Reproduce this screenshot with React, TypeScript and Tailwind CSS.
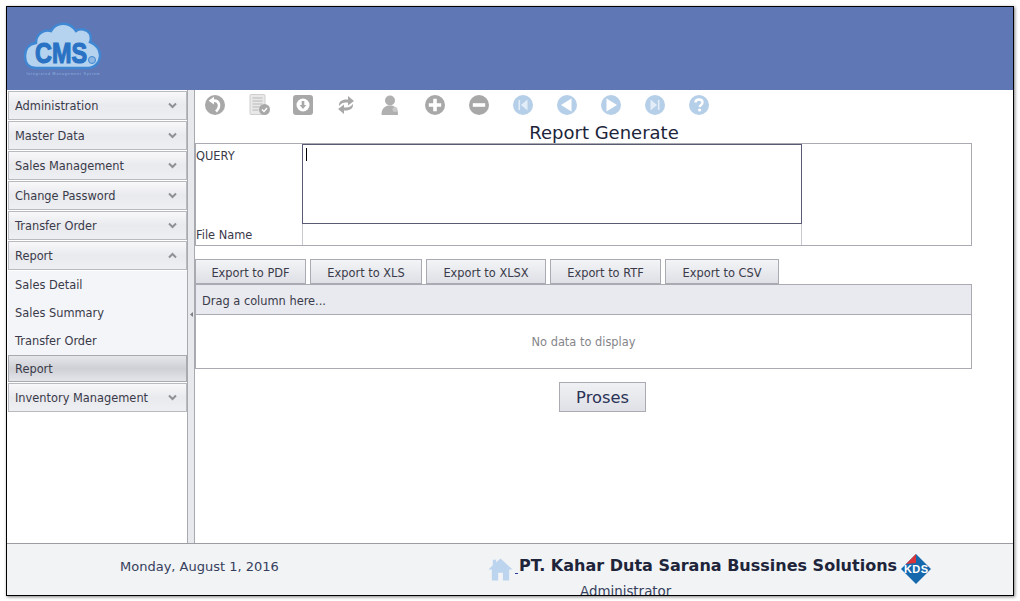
import React from "react";

const font = { fontFamily: '"DejaVu Sans", Verdana, sans-serif' };

const Chevron = ({ up }: { up?: boolean }) => (
  <svg width="9" height="7" viewBox="0 0 9 7" className="mb-[2px] shrink-0">
    <path d={up ? "M1 5.5 L4.5 2 L8 5.5" : "M1 1.5 L4.5 5 L8 1.5"} fill="none" stroke="#8e9096" strokeWidth="2" />
  </svg>
);

const MenuHead = ({ label, up }: { label: string; up?: boolean }) => (
  <div className="flex h-[29px] items-center justify-between border border-[#b9babf] bg-gradient-to-b from-[#f8f8fa] via-[#e9eaee] to-[#eeeff2] pl-[6px] pr-[9px] pt-[2px] text-[11.4px] text-[#3a3a4a]">
    <span>{label}</span>
    <Chevron up={up} />
  </div>
);

const subItems = ["Sales Detail", "Sales Summary", "Transfer Order"];

const Sidebar = () => (
  <aside className="flex w-[180px] shrink-0 flex-col gap-[1px] pl-[1px] pt-[1px]">
    <MenuHead label="Administration" />
    <MenuHead label="Master Data" />
    <MenuHead label="Sales Management" />
    <MenuHead label="Change Password" />
    <MenuHead label="Transfer Order" />
    <MenuHead label="Report" up />
    <div className="flex flex-col bg-[#f4f5f8] text-[11.4px] text-[#3a3a4a]">
      {subItems.map((item) => (
        <div key={item} className="flex h-[28px] items-center pl-[7px] pt-[2px]">
          {item}
        </div>
      ))}
      <div className="flex h-[27px] items-center border border-[#a9aab0] bg-gradient-to-b from-[#e6e7eb] via-[#cfd0d6] to-[#e4e5e9] pl-[6px] pt-[2px]">
        Report
      </div>
    </div>
    <MenuHead label="Inventory Management" />
  </aside>
);

const Splitter = () => (
  <div className="flex w-[8px] shrink-0 items-center border-x border-[#a9aab0] bg-[#e8e9ed] pl-[2px]">
    <svg width="3" height="5" viewBox="0 0 3 5" className="mb-[5px]">
      <path d="M3 0 L0 2.5 L3 5 Z" fill="#7d7e85" />
    </svg>
  </div>
);

const gray = "#a8a8a8";
const blue = "#b6cfe9";

const tools: React.ReactNode[] = [
  <svg key="undo" width="20" height="20" viewBox="0 0 20 20">
    <circle cx="10" cy="10" r="10" fill={gray} />
    <path d="M9 1.8 L9 9.6 L3.6 5.7 Z" fill="#fff" />
    <path d="M8 5.7 C14 5 16.5 11 11 16.5" fill="none" stroke="#fff" strokeWidth="2.6" />
  </svg>,
  <svg key="doc" width="22" height="22" viewBox="0 0 22 22">
    <rect x="1" y="0.5" width="15" height="20" rx="1" fill="#e8e8e8" stroke="#cfcfcf" />
    <path d="M3.5 4h10M3.5 7h10M3.5 10h10M3.5 13h7M3.5 16h6" stroke="#b8b8b8" strokeWidth="1.2" />
    <circle cx="15.5" cy="15.5" r="5.5" fill={gray} />
    <path d="M13 15.5 L15 17.5 L18 14" fill="none" stroke="#fff" strokeWidth="1.4" />
  </svg>,
  <svg key="save" width="20" height="20" viewBox="0 0 20 20">
    <rect width="20" height="20" rx="3" fill={gray} />
    <circle cx="10" cy="10" r="6.5" fill="#fff" />
    <path d="M8.7 6h2.6v4h2L10 14l-3.3-4h2z" fill={gray} />
  </svg>,
  <svg key="sync" width="18" height="20" viewBox="0 0 18 20">
    <path d="M2 11 C1.5 6 6 4 11 4.6 L11 1 L17 6 L11 10.5 L11 7.6 C7 7 4.5 8 2 11 Z" fill={gray} />
    <path d="M16 9 C16.5 14 12 16 7 15.4 L7 19 L1 14 L7 9.5 L7 12.4 C11 13 13.5 12 16 9 Z" fill={gray} />
  </svg>,
  <svg key="user" width="20" height="20" viewBox="0 0 20 20">
    <circle cx="9" cy="5.5" r="5" fill="#b0b0b0" />
    <path d="M0.5 20 C0.5 13 4 10.5 9 10.5 C14 10.5 17 13 17 20 Z" fill="#b0b0b0" />
    <circle cx="14" cy="14.5" r="2.5" fill="#c9c9c9" />
  </svg>,
  <svg key="plus" width="20" height="20" viewBox="0 0 20 20">
    <circle cx="10" cy="10" r="10" fill={gray} />
    <path d="M8.2 3.8h3.6v4.4h4.4v3.6h-4.4v4.4H8.2v-4.4H3.8V8.2h4.4z" fill="#fff" />
  </svg>,
  <svg key="minus" width="20" height="20" viewBox="0 0 20 20">
    <circle cx="10" cy="10" r="10" fill={gray} />
    <rect x="3.8" y="8.2" width="12.4" height="3.6" fill="#fff" />
  </svg>,
  <svg key="first" width="20" height="20" viewBox="0 0 20 20">
    <circle cx="10" cy="10" r="10" fill={blue} />
    <rect x="5.5" y="5" width="1.6" height="10" fill="#e3edf7" />
    <path d="M14.5 4.5 V15.5 L8 10 Z" fill="#e3edf7" />
  </svg>,
  <svg key="prev" width="20" height="20" viewBox="0 0 20 20">
    <circle cx="10" cy="10" r="10" fill={blue} />
    <path d="M14.5 3.5 V16.5 L4 10 Z" fill="#fff" />
  </svg>,
  <svg key="next" width="20" height="20" viewBox="0 0 20 20">
    <circle cx="10" cy="10" r="10" fill={blue} />
    <path d="M5.5 3.5 V16.5 L16 10 Z" fill="#fff" />
  </svg>,
  <svg key="last" width="20" height="20" viewBox="0 0 20 20">
    <circle cx="10" cy="10" r="10" fill={blue} />
    <rect x="12.9" y="5" width="1.6" height="10" fill="#e3edf7" />
    <path d="M5.5 4.5 V15.5 L12 10 Z" fill="#e3edf7" />
  </svg>,
  <svg key="help" width="20" height="20" viewBox="0 0 20 20">
    <circle cx="10" cy="10" r="10" fill={blue} />
    <path d="M6.5 7.5 C6.5 3.5 13.5 3.5 13.5 7.5 C13.5 10 10.8 9.8 10.8 12" fill="none" stroke="#fff" strokeWidth="2.4" />
    <circle cx="10.6" cy="15" r="1.6" fill="#fff" />
  </svg>,
];

const exportsList = [
  { label: "Export to PDF", width: "w-[111px]" },
  { label: "Export to XLS", width: "w-[112px]" },
  { label: "Export to XLSX", width: "w-[120px]" },
  { label: "Export to RTF", width: "w-[111px]" },
  { label: "Export to CSV", width: "w-[114px]" },
];

const Content = () => (
  <main className="relative flex min-w-0 flex-1 flex-col bg-white text-[#3a3a4a]">
    <div className="flex h-[30px] items-center pl-[10px]">
      {tools.map((icon, i) => (
        <div key={i} className="flex w-[44px] shrink-0 justify-start">
          {icon}
        </div>
      ))}
    </div>
    <h1 className="h-[23px] w-[818px] whitespace-nowrap text-center text-[18px] leading-[26px] text-[#20243a]">Report Generate</h1>

    <div className="flex h-[103px] w-[777px] border border-[#a9aab2] text-[11.4px]">
      <div className="flex w-[106px] shrink-0 flex-col justify-between pb-[1px] pt-[4px]">
        <span>QUERY</span>
        <span>File Name</span>
      </div>
      <div className="flex w-[500px] shrink-0 flex-col">
        <div className="h-[80px] border border-[#5a5a72] pl-[3px] pt-[3px]">
          <div className="h-[13px] w-[1px] bg-black" />
        </div>
        <div className="flex-1 border-x border-[#c8c9ce]" />
      </div>
    </div>

    <div className="mt-[13px] flex w-[777px] gap-[4px]">
      {exportsList.map((b) => (
        <div
          key={b.label}
          className={`flex h-[25px] ${b.width} items-center justify-center border border-[#a9aab2] bg-gradient-to-b from-[#f3f4f6] to-[#dfe0e6] pt-[4px] text-[11.4px]`}
        >
          {b.label}
        </div>
      ))}
    </div>

    <div className="flex h-[85px] w-[777px] flex-col border border-t-0 border-[#a9aab2]">
      <div className="flex h-[31px] items-center border-y border-[#a9aab2] bg-[#e9eaef] pl-[6px] pt-[4px] text-[11.4px]">
        Drag a column here...
      </div>
      <div className="flex flex-1 items-center justify-center pt-[2px] text-[11.4px] text-[#85858a]">No data to display</div>
    </div>

    <div className="mt-[13px] flex w-[815px] justify-center">
      <div className="flex h-[30px] w-[87px] items-center justify-center border border-[#a9aab2] bg-gradient-to-b from-[#f0f1f4] to-[#e0e1e7] pt-[2px] text-[16.3px] text-[#2a3256]">
        Proses
      </div>
    </div>
  </main>
);

const Logo = () => (
  <svg width="78" height="56" viewBox="0 0 78 56">
    <path
      d="M12 46 C4 46 1 40 1 34 C1 27 5 22 12 21 C12 12 20 7 27 9 C29 4 36 1 42 2 C47 3 50 6 52 9 C56 6 63 7 66 12 C67 15 67 18 66 20 C72 22 76 28 76 33 C76 40 71 46 64 46 Z"
      fill="#b5d2ee"
      stroke="#3f87d3"
      strokeWidth="2.4"
    />
    <text
      x="37"
      y="41"
      textAnchor="middle"
      fontSize="30"
      fontWeight="700"
      fill="#2a72c4"
      stroke="#2a72c4"
      strokeWidth="1.2"
      textLength="52"
      lengthAdjust="spacingAndGlyphs"
      style={{ fontFamily: '"Liberation Sans", Arial, sans-serif' }}
    >
      CMS
    </text>
    <circle cx="68" cy="38" r="3.5" fill="#8fb9e2" stroke="#3f87d3" />
    <text x="39" y="53" textAnchor="middle" fontSize="3.6" fill="#8fb5e0" textLength="73" style={{ fontFamily: '"Liberation Sans", Arial, sans-serif' }}>
      Integrated Management System
    </text>
  </svg>
);

const Footer = () => (
  <footer className="flex h-[52px] shrink-0 overflow-hidden border-t border-[#9c9da3] bg-[#f1f3f5]">
    <div className="w-[481px] shrink-0 pl-[113px] pt-[15px] text-[13px] leading-[16px] text-[#35405c]">Monday, August 1, 2016</div>
    <div className="flex flex-col">
      <div className="flex h-[44px] shrink-0 items-center">
        <svg width="25" height="23" viewBox="0 0 26 25" preserveAspectRatio="none" className="mt-[6px] shrink-0">
          <path d="M13 0.5 L25.5 12.5 L22 12.5 L22 24.5 L15.5 24.5 L15.5 16 L10.5 16 L10.5 24.5 L4 24.5 L4 12.5 L0.5 12.5 L5 8 L5 2 L8.5 2 L8.5 5 Z" fill="#bcd4ee" />
        </svg>
        <span className="ml-[2px] mt-[5px] h-[10px] w-[3px] shrink-0 border-b border-[#2b3aa0]" />
        <span className="ml-[1px] whitespace-nowrap text-[16px] font-bold leading-[22px] text-[#20243a]">PT. Kahar Duta Sarana Bussines Solutions</span>
        <svg width="30" height="30" viewBox="0 0 30 30" className="ml-[4px] mt-[5px] shrink-0">
          <path d="M15 0 L30 15 L15 30 L0 15 Z" fill="#1668ad" />
          <path d="M15 0 L15 9 L5 10 Z" fill="#d8353a" />
          <text x="15" y="19" textAnchor="middle" fontSize="11" fontWeight="700" fill="#fff" textLength="24" style={{ fontFamily: '"Liberation Sans", Arial, sans-serif' }}>
            KDS
          </text>
        </svg>
      </div>
      <div className="-mt-[4px] shrink-0 whitespace-nowrap pl-[92px] text-[13.4px] leading-[16px] text-[#35405c]">Administrator</div>
    </div>
  </footer>
);

export default function App() {
  return (
    <div className="h-[601px] w-[1020px] overflow-hidden bg-white pl-[6px] pt-[6px]" style={font}>
      <div className="flex h-[590px] w-[1008px] flex-col border border-black bg-white shadow-[1px_1px_3px_rgba(0,0,0,0.5)]">
        <header className="flex h-[83px] shrink-0 items-start bg-[#5f77b5] pl-[17px] pt-[15px]">
          <Logo />
        </header>
        <div className="flex min-h-0 flex-1">
          <Sidebar />
          <Splitter />
          <Content />
        </div>
        <Footer />
      </div>
    </div>
  );
}
